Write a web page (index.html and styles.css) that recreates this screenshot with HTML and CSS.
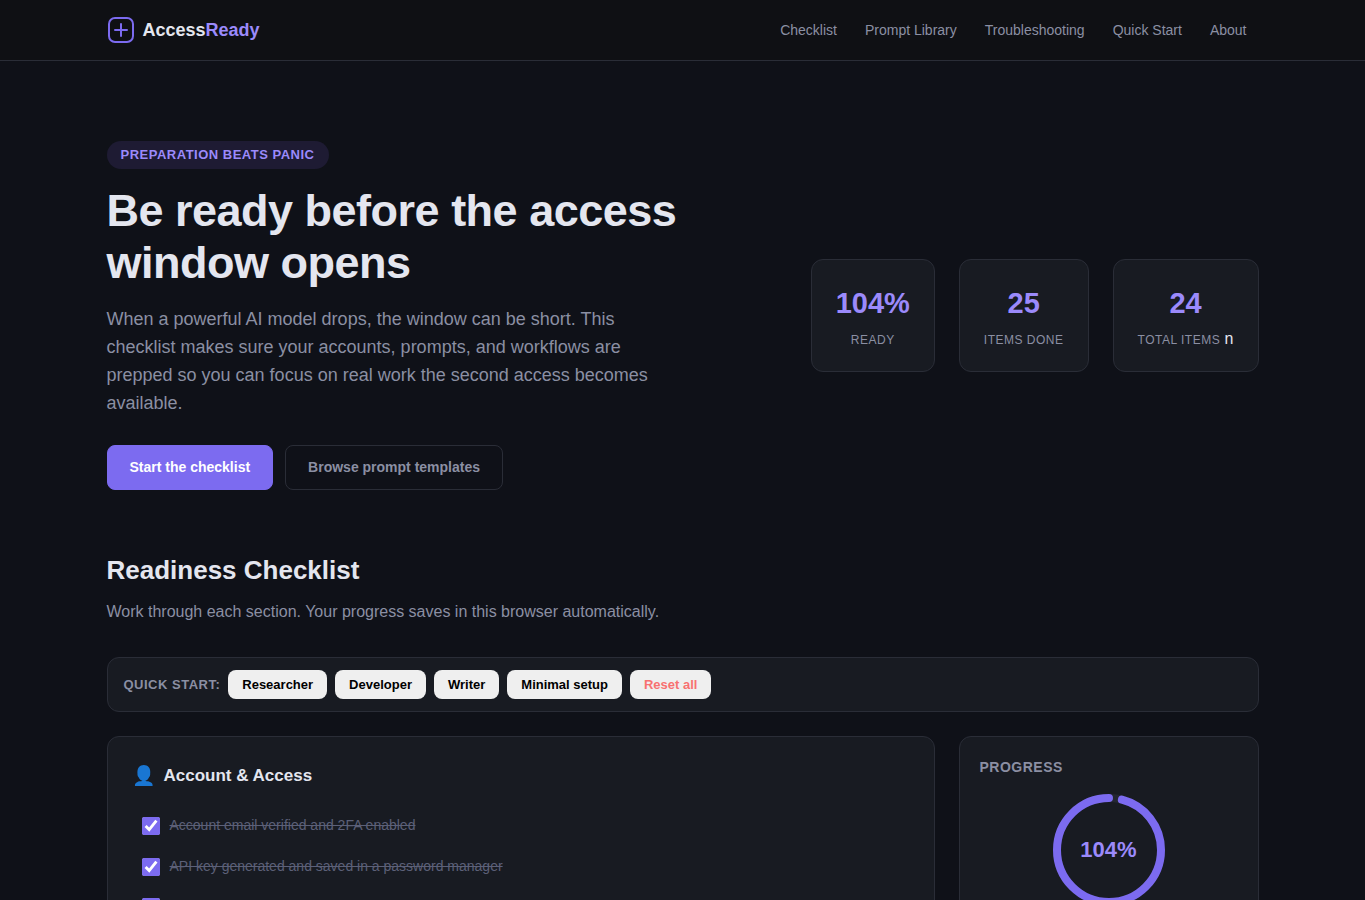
FILE: index.html
```html
<!DOCTYPE html>
<html lang="en">
<head>
<meta charset="utf-8">
<meta name="viewport" content="width=device-width, initial-scale=1">
<title>AccessReady</title>
<link rel="stylesheet" href="styles.css">
</head>
<body>
<header class="site-header">
  <div class="container header-row">
    <a class="logo" href="#top">
      <svg class="logo-mark" viewBox="0 0 28 28" fill="none" stroke="currentColor" stroke-width="2" stroke-linecap="round" aria-hidden="true"><rect x="2" y="2" width="24" height="24" rx="6"/><path d="M14 8v12M8 14h12"/></svg>
      <span>Access<span class="accent">Ready</span></span>
    </a>
    <nav class="nav" aria-label="Main">
      <a href="#checklist">Checklist</a>
      <a href="#prompts">Prompt Library</a>
      <a href="#troubleshooting">Troubleshooting</a>
      <a href="#quick-start">Quick Start</a>
      <a href="#about">About</a>
    </nav>
  </div>
</header>
<main class="container" id="top">
  <section class="hero">
    <div class="hero-copy">
      <span class="badge">Preparation beats panic</span>
      <h1>Be ready before the access window opens</h1>
      <p class="lead">When a powerful AI model drops, the window can be short. This checklist makes sure your accounts, prompts, and workflows are prepped so you can focus on real work the second access becomes available.</p>
      <div class="actions">
        <a class="btn btn-primary" href="#checklist">Start the checklist</a>
        <a class="btn btn-outline" href="#prompts">Browse prompt templates</a>
      </div>
    </div>
    <div class="stats">
      <div class="stat"><span class="stat-value">104%</span><span><span class="stat-label">Ready</span></span></div>
      <div class="stat"><span class="stat-value">25</span><span><span class="stat-label">Items done</span></span></div>
      <div class="stat"><span class="stat-value">24</span><span><span class="stat-label">Total items</span> n</span></div>
    </div>
  </section>
  <section id="checklist">
    <h2>Readiness Checklist</h2>
    <p class="intro">Work through each section. Your progress saves in this browser automatically.</p>
    <div class="presets" id="quick-start">
      <span class="presets-label">Quick start:</span>
      <button type="button" class="preset">Researcher</button>
      <button type="button" class="preset">Developer</button>
      <button type="button" class="preset">Writer</button>
      <button type="button" class="preset">Minimal setup</button>
      <button type="button" class="preset preset-reset">Reset all</button>
    </div>
    <div class="columns">
      <div class="card group">
        <h3><span class="group-icon">👤</span>Account &amp; Access</h3>
        <ul class="items">
          <li><label><input type="checkbox" checked><span>Account email verified and 2FA enabled</span></label></li>
          <li><label><input type="checkbox" checked><span>API key generated and saved in a password manager</span></label></li>
          <li><label><input type="checkbox" aria-label="Checklist item" checked></label></li>
        </ul>
      </div>
      <aside class="card progress">
        <h4>Progress</h4>
        <div class="ring">
          <svg viewBox="0 0 120 120" fill="none" stroke-width="8" aria-hidden="true"><circle class="ring-track" cx="60" cy="60" r="52"/><circle class="ring-value" cx="60" cy="60" r="52" pathLength="100" stroke-dasharray="100" stroke-dashoffset="-4" transform="rotate(-90 60 60)"/></svg>
          <span class="ring-text">104%</span>
        </div>
      </aside>
    </div>
  </section>
</main>
</body>
</html>
```
FILE: styles.css
```css
* { box-sizing: border-box; margin: 0; padding: 0; }
body { background: #0f1118; color: #e4e6ef; font-family: "Liberation Sans", Arial, sans-serif; font-size: 16px; line-height: 26px; }
a { text-decoration: none; color: inherit; }
.container { width: 100%; max-width: 1200px; margin: 0 auto; padding: 0 24px; }
.site-header { background: #0f1014; border-bottom: 1px solid #2a2d37; }
.header-row { display: flex; align-items: center; justify-content: space-between; height: 60px; }
.logo { display: flex; align-items: center; gap: 8px; font-size: 18px; font-weight: 700; }
.logo-mark { width: 28px; height: 28px; color: #7c6bf0; }
.accent { color: #9b8afb; }
.nav { display: flex; gap: 28px; padding-right: 12px; font-size: 14px; color: #8b8fa3; }
.hero { display: flex; align-items: center; justify-content: space-between; gap: 48px; padding: 80px 0 64px; }
.hero-copy { max-width: 580px; }
.badge { display: block; width: fit-content; padding: 4px 14px; border-radius: 20px; background: #1e1b33; color: #9b8afb; font-size: 13px; line-height: 20px; font-weight: 700; letter-spacing: 0.5px; text-transform: uppercase; }
h1 { margin: 16px 0; font-size: 45px; line-height: 52px; letter-spacing: -0.5px; }
.lead { max-width: 560px; margin-bottom: 28px; font-size: 18px; line-height: 28px; color: #8b8fa3; }
.actions { display: flex; gap: 12px; }
.btn { padding: 10px 22px; border: 1px solid #2a2d37; border-radius: 8px; font-size: 14px; line-height: 23px; font-weight: 700; }
.btn-primary { background: #7c6bf0; border-color: #7c6bf0; color: #fff; }
.btn-outline { color: #8b8fa3; }
.stats { display: flex; gap: 24px; }
.stat { display: flex; flex-direction: column; align-items: center; padding: 21px 24px 19px; background: #181b22; border: 1px solid #2a2d37; border-radius: 12px; white-space: nowrap; }
.stat-value { font-size: 29px; line-height: 45px; font-weight: 700; color: #9b8afb; }
.stat-label { font-size: 12px; line-height: 12px; letter-spacing: 0.5px; text-transform: uppercase; color: #8b8fa3; }
h2 { font-size: 26px; line-height: 32px; margin-bottom: 13px; }
.intro { color: #8b8fa3; margin-bottom: 32px; }
.presets { display: flex; flex-wrap: wrap; align-items: center; gap: 8px; padding: 12px 16px; background: #181b22; border: 1px solid #2a2d37; border-radius: 12px; margin-bottom: 24px; }
.presets-label { font-size: 13px; font-weight: 700; letter-spacing: 0.5px; text-transform: uppercase; color: #8b8fa3; }
.preset { padding: 7px 14px; border: 0; border-radius: 8px; background: #efefef; color: #000; font: 700 13px/15px "Liberation Sans", Arial, sans-serif; }
.preset-reset { color: #f87171; }
.columns { display: grid; grid-template-columns: 1fr 300px; gap: 24px; align-items: start; }
.card { background: #181b22; border: 1px solid #2a2d37; border-radius: 12px; }
.group { padding: 24px; }
h3 { display: flex; align-items: center; gap: 8px; font-size: 17px; line-height: 30px; margin-bottom: 14px; }
.group-icon { font-size: 19px; font-weight: 400; }
.items { list-style: none; }
.items li { padding: 8px 10px; }
.items label { display: flex; align-items: center; gap: 10px; min-height: 24px; font-size: 14px; line-height: 25px; color: #5c6078; text-decoration: line-through; }
.items input { width: 18px; height: 18px; accent-color: #7c6bf0; }
.progress { padding: 20px; }
h4 { font-size: 14px; line-height: 21px; letter-spacing: 0.5px; text-transform: uppercase; color: #8b8fa3; margin-bottom: 12px; }
.ring { display: grid; place-items: center; }
.ring > * { grid-area: 1 / 1; }
.ring svg { width: 120px; height: 120px; }
.ring-track { stroke: #232631; }
.ring-value { stroke: #7c6bf0; stroke-linecap: round; }
.ring-text { font-size: 22px; font-weight: 700; color: #9b8afb; }
```
